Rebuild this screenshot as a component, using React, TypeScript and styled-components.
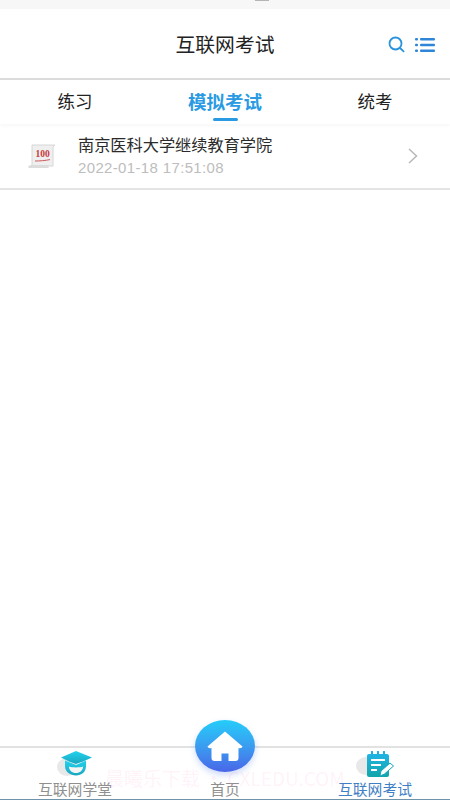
import React from "react";
import styled, { createGlobalStyle } from "styled-components";

const Global = createGlobalStyle`
  html, body { margin: 0; padding: 0; background: #fff; }
  #root { width: 450px; height: 800px; overflow: hidden; }
  * { box-sizing: border-box; }
`;

const CJK = `"Noto Sans CJK SC", "Noto Sans", sans-serif`;

const Page = styled.div`
  position: relative;
  width: 450px;
  height: 800px;
  display: flex;
  flex-direction: column;
  background: #fff;
  font-family: ${CJK};
  overflow: hidden;
`;
const StatusBar = styled.div`
  height: 9px;
  flex: none;
  background: #f7f7f7;
  display: flex;
  justify-content: center;
  padding-left: 74px;
`;
const StatusMark = styled.span`
  width: 14px;
  height: 1px;
  background: #b5b5b5;
`;
const NavBar = styled.header`
  height: 71px;
  flex: none;
  border-bottom: 2px solid #dcdcdc;
  display: flex;
  align-items: center;
  justify-content: center;
  position: relative;
`;
const Title = styled.h1`
  margin: 0;
  font-size: 19.8px;
  font-weight: 400;
  color: #222;
  line-height: 28px;
`;
const NavActions = styled.div`
  position: absolute;
  right: 15px;
  top: 27px;
  display: flex;
  align-items: center;
  gap: 10px;
`;
const Tabs = styled.nav`
  height: 44px;
  flex: none;
  display: grid;
  grid-template-columns: repeat(3, 1fr);
  box-shadow: 0 2px 3px rgba(0, 0, 0, 0.03);
`;
const Tab = styled.div<{ $active?: boolean }>`
  position: relative;
  display: flex;
  justify-content: center;
  padding-top: 8px;
  font-size: ${(p) => (p.$active ? "18.5px" : "17.5px")};
  line-height: 26px;
  font-weight: ${(p) => (p.$active ? 700 : 400)};
  color: ${(p) => (p.$active ? "#2a9be3" : "#222")};
  ${(p) =>
    p.$active &&
    `&::after { content: ""; position: absolute; left: 63px; bottom: 3px; width: 25px; height: 3px; border-radius: 2px; background: #2a9be3; }`}
`;
const List = styled.main`
  flex: 1;
`;
const Row = styled.div`
  height: 66px;
  border-bottom: 2px solid #e4e4e4;
  display: flex;
  align-items: center;
  padding: 0 32px 0 27px;
`;
const RowIcon = styled.div`
  width: 29px;
  height: 26px;
  flex: none;
  margin-right: 22px;
  margin-top: 2px;
  display: flex;
`;
const RowBody = styled.div`
  flex: 1;
  display: flex;
  flex-direction: column;
  gap: 3px;
  margin-bottom: 2px;
`;
const RowTitle = styled.div`
  font-size: 16.2px;
  line-height: 22px;
  color: #2b2b2b;
`;
const RowDate = styled.div`
  font-family: "Liberation Sans", sans-serif;
  font-size: 15px;
  line-height: 20px;
  color: #bdbdbd;
  letter-spacing: 0.35px;
`;
const TabBar = styled.footer`
  height: 54px;
  flex: none;
  border-top: 2px solid #e2e2e2;
  border-bottom: 1px solid #6f93a8;
  display: grid;
  grid-template-columns: repeat(3, 1fr);
`;
const BarItem = styled.div`
  display: flex;
  flex-direction: column;
  align-items: center;
  justify-content: flex-end;
  padding-bottom: 1px;
`;
const BarIcon = styled.div`
  height: 30px;
  display: flex;
  align-items: flex-end;
  margin-bottom: 1px;
`;
const BarLabel = styled.span<{ $active?: boolean }>`
  font-size: 14.8px;
  line-height: 20px;
  color: ${(p) => (p.$active ? "#3f7fc4" : "#8f8f8f")};
`;
const HomeButton = styled.div`
  position: absolute;
  left: 195px;
  top: 720px;
  width: 60px;
  height: 52px;
  border-radius: 50%;
  background: linear-gradient(180deg, #24cdfa 0%, #3a9df0 50%, #4a66e8 100%);
  box-shadow: 0 3px 6px rgba(74, 120, 235, 0.28);
  display: flex;
  align-items: center;
  justify-content: center;
`;
const Watermark = styled.div`
  position: absolute;
  left: 105px;
  top: 765px;
  font-size: 19px;
  line-height: 26px;
  color: rgba(255, 120, 200, 0.1);
  white-space: nowrap;
  pointer-events: none;
`;

const SearchIcon = () => (
  <svg width="17" height="17" viewBox="0 0 17 17" fill="none" stroke="#2a93dc" strokeWidth="1.8" strokeLinecap="round">
    <circle cx="7.5" cy="7.5" r="6" />
    <path d="M12 12 15.6 15.4" />
  </svg>
);
const ListIcon = () => (
  <svg width="20" height="16" viewBox="0 0 20 16" fill="#2f86d8">
    <rect x="0" y="1" width="3" height="2.4" rx="1" />
    <rect x="5" y="1" width="15" height="2.4" rx="1" />
    <rect x="0" y="6.8" width="3" height="2.4" rx="1" />
    <rect x="5" y="6.8" width="15" height="2.4" rx="1" />
    <rect x="0" y="12.6" width="3" height="2.4" rx="1" />
    <rect x="5" y="12.6" width="15" height="2.4" rx="1" />
  </svg>
);
const ScoreIcon = () => (
  <svg width="29" height="26" viewBox="0 0 29 26">
    <path d="M5 1h23l-2 2v19H5z" fill="#efefef" stroke="#d6d6d6" strokeWidth="1" />
    <path d="M1 23c1-1.600 2-2 4-2h17c-1 1-1 2 0 3H2z" fill="#dcdcdc" />
    <text x="15.500" y="13" textAnchor="middle" fontFamily="Liberation Serif, serif" fontWeight="700" fontSize="9.500" fill="#c8393a">100</text>
    <path d="M8 17c5 0 10-.4 15-1.400" stroke="#d0595a" strokeWidth="1" fill="none" />
  </svg>
);
const CapIcon = () => (
  <svg width="36" height="27" viewBox="0 0 36 27">
    <defs>
      <linearGradient id="capG" x1="0" y1="0" x2="0" y2="1">
        <stop offset="0" stopColor="#22d3ee" />
        <stop offset="1" stopColor="#1aa6c0" />
      </linearGradient>
    </defs>
    <ellipse cx="10" cy="16" rx="10" ry="9" fill="#e8e8e8" />
    <path d="M19 0 35 6.500 26 10.500 19 13 12 10.500 4 6.500z" fill="url(#capG)" />
    <path d="M8 9.500 19 14 29 9.500V15c0 6-4.500 9.500-10 9.500S8 21 8 15z" fill="url(#capG)" />
    <path d="M12 15.500c3 1.200 11 1.200 14 0 0 4-3 6.500-7 6.500s-7-2.500-7-6.500z" fill="#f4f4f4" />
  </svg>
);
const ExamIcon = () => (
  <svg width="38" height="27" viewBox="0 0 38 27">
    <defs>
      <linearGradient id="examG" x1="0" y1="0" x2="0" y2="1">
        <stop offset="0" stopColor="#1fb4e4" />
        <stop offset="1" stopColor="#12a5a8" />
      </linearGradient>
    </defs>
    <ellipse cx="10" cy="15" rx="10" ry="9" fill="#e8e8e8" />
    <rect x="11" y="3" width="22" height="23" rx="2" fill="url(#examG)" />
    <path d="M16 .8v4.500M22 .8v4.500M28 .8v4.500" stroke="#1fb0e0" strokeWidth="2" strokeLinecap="round" />
    <path d="M15 9h14M15 14h10M15 19h6" stroke="#fff" strokeWidth="2" />
    <path d="M24 25l1-5 9-8 3.500 3-9 8z" fill="#fff" stroke="#14a8b8" strokeWidth="1" />
  </svg>
);
const HomeIcon = () => (
  <svg width="36" height="31" viewBox="0 0 36 31" fill="#fff">
    <path d="M18 .5 35.500 15.500c-.5 1.500-2 2-4 1.500V27a3 3 0 0 1-3 3H21.500v-7.500h-7V30H7.500a3 3 0 0 1-3-3V17c-2 .5-3.500 0-4-1.500z" />
  </svg>
);

export default function App() {
  return (
    <Page>
      <Global />
      <StatusBar>
        <StatusMark />
      </StatusBar>
      <NavBar>
        <Title>互联网考试</Title>
        <NavActions>
          <SearchIcon />
          <ListIcon />
        </NavActions>
      </NavBar>
      <Tabs>
        <Tab>练习</Tab>
        <Tab $active>模拟考试</Tab>
        <Tab>统考</Tab>
      </Tabs>
      <List>
        <Row>
          <RowIcon>
            <ScoreIcon />
          </RowIcon>
          <RowBody>
            <RowTitle>南京医科大学继续教育学院</RowTitle>
            <RowDate>2022-01-18 17:51:08</RowDate>
          </RowBody>
          <svg width="10" height="16" viewBox="0 0 10 16" fill="none" stroke="#b8b8b8" strokeWidth="1.500">
            <path d="M1 1l7.500 7L1 15" />
          </svg>
        </Row>
      </List>
      <TabBar>
        <BarItem>
          <BarIcon>
            <CapIcon />
          </BarIcon>
          <BarLabel>互联网学堂</BarLabel>
        </BarItem>
        <BarItem>
          <BarLabel>首页</BarLabel>
        </BarItem>
        <BarItem>
          <BarIcon>
            <ExamIcon />
          </BarIcon>
          <BarLabel $active>互联网考试</BarLabel>
        </BarItem>
      </TabBar>
      <HomeButton>
        <HomeIcon />
      </HomeButton>
      <Watermark>晨曦乐下载 · CXLEDU.COM</Watermark>
    </Page>
  );
}
